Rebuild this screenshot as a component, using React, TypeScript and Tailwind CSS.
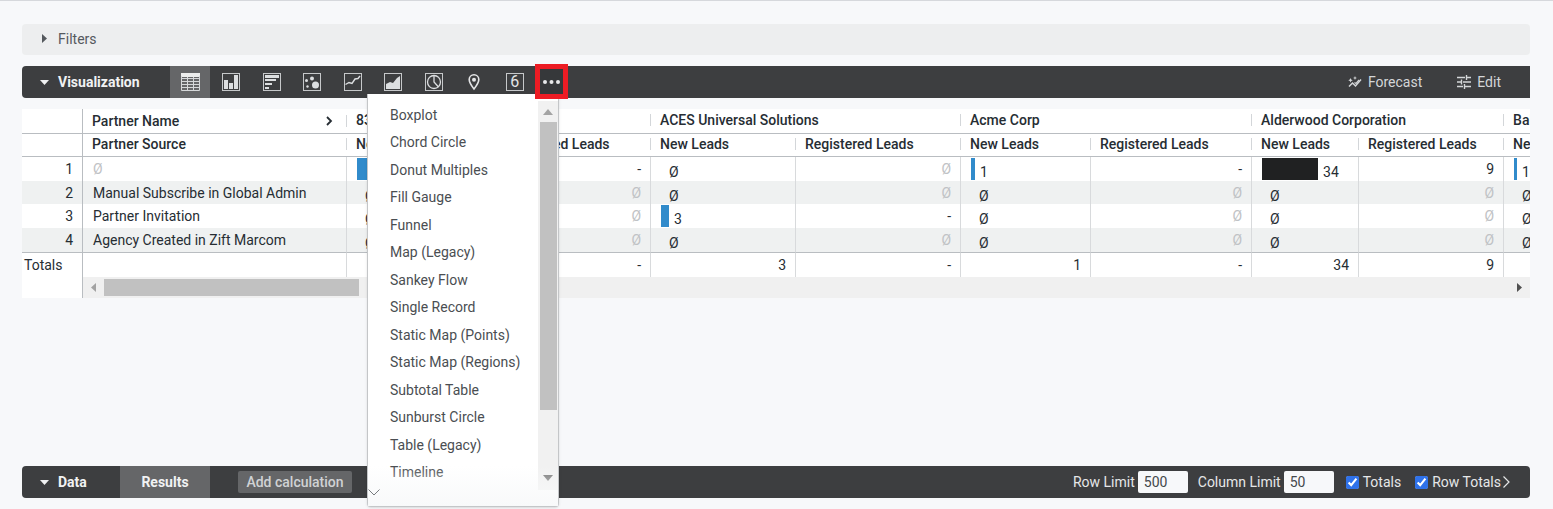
import { useState } from "react";
import type { ReactNode } from "react";

type Lead = { value: string | null; bar?: number; dark?: boolean };
type Row = { source: string | null; height: string; cells: [Lead, string | null][] };

const none: Lead = { value: null };

const partners = ["83", "ACES Universal Solutions", "Acme Corp", "Alderwood Corporation", "Balance Corp"];

const columns = [
  "w-[61px]",
  "w-[264px]",
  "w-[145px]",
  "w-[159px]",
  "w-[145px]",
  "w-[165px]",
  "w-[130px]",
  "w-[161px]",
  "w-[107px]",
  "w-[145px]",
  "w-[130px]",
  "w-[145px]",
];

const rows: Row[] = [
  {
    source: null,
    height: "h-6",
    cells: [
      [{ value: "61", bar: 100 }, "-"],
      [none, null],
      [{ value: "1", bar: 4 }, "-"],
      [{ value: "34", bar: 56, dark: true }, "9"],
      [{ value: "1", bar: 3 }, "-"],
    ],
  },
  {
    source: "Manual Subscribe in Global Admin",
    height: "h-[23px]",
    cells: [[none, null], [none, null], [none, null], [none, null], [none, null]],
  },
  {
    source: "Partner Invitation",
    height: "h-6",
    cells: [[none, null], [{ value: "3", bar: 8 }, "-"], [none, null], [none, null], [none, null]],
  },
  {
    source: "Agency Created in Zift Marcom",
    height: "h-[25px]",
    cells: [[none, null], [none, null], [none, null], [none, null], [none, null]],
  },
];

const totals = ["61", "-", "3", "-", "1", "-", "34", "9", "1", "-"];

const menuItems = [
  "Boxplot",
  "Chord Circle",
  "Donut Multiples",
  "Fill Gauge",
  "Funnel",
  "Map (Legacy)",
  "Sankey Flow",
  "Single Record",
  "Static Map (Points)",
  "Static Map (Regions)",
  "Subtotal Table",
  "Sunburst Circle",
  "Table (Legacy)",
  "Timeline",
];

function Framed({ children }: { children: ReactNode }) {
  return (
    <svg width="18" height="18" viewBox="0 0 18 18" fill="none" aria-hidden="true">
      <rect x="0.5" y="0.5" width="17" height="17" stroke="#c6c8ca" />
      {children}
    </svg>
  );
}

const charts: { name: string; icon: ReactNode }[] = [
  {
    name: "Column",
    icon: (
      <Framed>
        <path d="M2 7h4v9H2zM7 10h4v6H7zM12 2h4v14h-4z" fill="#dcdee0" />
      </Framed>
    ),
  },
  {
    name: "Bar",
    icon: (
      <Framed>
        <path d="M2 2h14v3H2zM2 6h11v2H2zM2 10h7v2H2zM2 14h4v2H2z" fill="#dcdee0" />
      </Framed>
    ),
  },
  {
    name: "Scatterplot",
    icon: (
      <Framed>
        <g fill="#dcdee0">
          <circle cx="12.5" cy="12" r="3.5" />
          <circle cx="9" cy="5.5" r="2" />
          <circle cx="3.5" cy="7.5" r="1.5" />
          <circle cx="4.5" cy="13.5" r="1.2" />
        </g>
      </Framed>
    ),
  },
  {
    name: "Line",
    icon: (
      <Framed>
        <path d="M1.5 11.5 5 9.5l3 1L11 6l3-.5L16 3" stroke="#dcdee0" strokeWidth="1.4" />
      </Framed>
    ),
  },
  {
    name: "Area",
    icon: (
      <Framed>
        <path d="M2 16v-5l4-2 3 1 4-5 3-2v13z" fill="#dcdee0" />
      </Framed>
    ),
  },
  {
    name: "Pie",
    icon: (
      <Framed>
        <circle cx="9" cy="9" r="6.5" stroke="#dcdee0" strokeWidth="1.3" />
        <path d="M9 2.5V9l4.5 5" stroke="#dcdee0" strokeWidth="1.3" />
      </Framed>
    ),
  },
  {
    name: "Map",
    icon: (
      <svg width="18" height="18" viewBox="0 0 18 18" aria-hidden="true">
        <path
          d="M9 1.800c-2.800 0-4.800 2.100-4.800 4.800C4.200 10 9 16 9 16s4.800-6 4.800-9.400c0-2.700-2-4.800-4.800-4.800z"
          fill="none"
          stroke="#e4e5e6"
          strokeWidth="1.6"
        />
        <circle cx="9" cy="6.8" r="2" fill="#e4e5e6" />
      </svg>
    ),
  },
  {
    name: "Single value",
    icon: (
      <span className="grid size-[18px] place-items-center border border-[#c6c8ca] text-base leading-none text-[#e4e5e6]">
        6
      </span>
    ),
  },
];

function TableIcon() {
  return (
    <svg width="19" height="18" viewBox="0 0 19 18" aria-hidden="true">
      <path fill="#eceded" d="M0 0h19v4H0z" />
      <path
        fill="none"
        stroke="#d6d8da"
        d="M.5 3v14.500h18V3M0 5.500h19M0 8.500h19M0 11.500h19M0 14.500h19M6.500 4v14M12.500 4v14"
      />
    </svg>
  );
}

function ForecastIcon() {
  return (
    <svg width="14" height="12" viewBox="0 0 14 12" fill="none" aria-hidden="true">
      <path d="M1 10.500 4.500 7l3 3L13 3.500" stroke="#d4d6d8" strokeWidth="1.5" />
      <path d="m6.500 6.500 1.500 1L11 4" stroke="#d4d6d8" strokeWidth="1.2" />
      <path
        d="m2.500 2 .7 1.500 1.500.7-1.500.7-.7 1.500-.7-1.500L.3 4.200l1.500-.7zM7 0l.6 1.400L9 2l-1.400.6L7 4l-.6-1.400L5 2l1.400-.6z"
        fill="#d4d6d8"
      />
    </svg>
  );
}

function TuneIcon() {
  return (
    <svg width="14" height="14" viewBox="0 0 14 14" fill="none" aria-hidden="true">
      <path
        d="M0 2.500h8M10 2.500h4M9.500 0v5M0 7h4M6 7h8M4.500 4.500v5M0 11.500h6M8 11.500h6M7.500 9v5"
        stroke="#d4d6d8"
        strokeWidth="1.4"
      />
    </svg>
  );
}

function Caret({ className, d, w, h }: { className: string; d: string; w: number; h: number }) {
  return (
    <svg width={w} height={h} viewBox={`0 0 ${w} ${h}`} className={className} aria-hidden="true">
      <path d={d} fill="currentColor" />
    </svg>
  );
}

function HeadLabel({ children }: { children: ReactNode }) {
  return (
    <div className="flex items-center justify-between pb-[2px] pl-[9px]">
      <span className="whitespace-nowrap">{children}</span>
      <span className="h-3 w-px bg-[#d3d6d9]" />
    </div>
  );
}

function LeadCell({ lead }: { lead: Lead }) {
  if (lead.value === null) return <div className="pt-[7px] pl-[18px] leading-4">Ø</div>;
  return (
    <div className="flex items-start gap-[5px] pl-[10px] leading-4">
      <span
        className={
          lead.dark ? "mt-px h-[22px] shrink-0 bg-[#202122]" : "mt-px h-[22px] shrink-0 bg-[#318bcb]"
        }
        style={{ width: lead.bar }}
      />
      <span className="pt-[7px]">{lead.value}</span>
    </div>
  );
}

function ChartMenu() {
  return (
    <div className="absolute top-[28px] right-[9px] h-[413px] w-[192px] rounded-b-sm border border-t-0 border-[#c4c6c8] bg-white pt-[7px] shadow-sm">
      <div className="flex">
        <ul className="grid h-[385px] flex-1 auto-rows-fr">
          {menuItems.map((item) => (
            <li key={item} className="flex">
              <button type="button" className="w-full pl-[22px] text-left whitespace-nowrap text-[#4a4e52]">
                {item}
              </button>
            </li>
          ))}
        </ul>
        <div className="flex h-[389px] w-[20px] flex-col items-center bg-[#f1f1f1]">
          <Caret className="mt-2 text-[#a3a3a3]" d="M0 6 5 0l5 6z" w={10} h={6} />
          <div className="mt-[7px] h-[288px] w-[17px] bg-[#c1c1c1]" />
          <Caret className="mt-auto mb-[9px] text-[#707070]" d="M0 0h10L5 6z" w={10} h={6} />
        </div>
      </div>
      <div className="pointer-events-none absolute inset-x-0 bottom-0 flex h-10 items-end bg-linear-to-b from-white/0 to-[#f8f9fa]">
        <svg width="12" height="7" viewBox="0 0 12 7" fill="none" className="mb-[10px]" aria-hidden="true">
          <path d="m.5.5 5.500 5.500L11.500.5" stroke="#777b7f" />
        </svg>
      </div>
    </div>
  );
}

export default function App() {
  const [menuOpen, setMenuOpen] = useState(true);
  const [rowLimit, setRowLimit] = useState("500");
  const [columnLimit, setColumnLimit] = useState("50");

  return (
    <div className="flex min-h-screen flex-col overflow-hidden border-t border-[#d6d8dc] bg-[#f7f8fa] pt-[23px] pr-[23px] pb-[11px] pl-[22px] font-[Roboto,sans-serif] text-sm text-[#262d33]">
      <button
        type="button"
        className="flex h-[31px] items-center rounded-sm bg-[#edeeef] pb-[2px] pl-[20px] text-[#55595e]"
      >
        <Caret className="mr-[11px] text-[#55595e]" d="M0 0l5 4.500L0 9z" w={5} h={9} />
        Filters
      </button>

      <div className="relative z-10 mt-[11px] flex h-8 items-center rounded-l-sm bg-[#3d3e40]">
        <button type="button" className="flex w-[148px] items-center pl-[18px] font-bold text-[#f1f2f3]">
          <Caret className="mr-[9px]" d="M0 0h9L4.500 5z" w={9} h={5} />
          Visualization
        </button>
        <button type="button" aria-label="Table" className="flex h-8 w-10 items-center justify-center bg-[#656668]">
          <TableIcon />
        </button>
        <div className="ml-px grid w-[324px] grid-cols-8">
          {charts.map((chart) => (
            <button key={chart.name} type="button" aria-label={chart.name} className="flex h-8 items-center justify-center">
              {chart.icon}
            </button>
          ))}
        </div>
        <div className="relative h-8 w-[33px]">
          {menuOpen && <ChartMenu />}
          <button
            type="button"
            aria-label="More charts"
            onClick={() => setMenuOpen(!menuOpen)}
            className="absolute inset-x-0 -top-[2px] flex h-[35px] items-center justify-center border-[5px] border-[#ed1c24] bg-[#36383a]"
          >
            <svg width="17" height="4" viewBox="0 0 17 4" fill="#e8e9ea" aria-hidden="true">
              <circle cx="2" cy="2" r="2" />
              <circle cx="8.5" cy="2" r="2" />
              <circle cx="15" cy="2" r="2" />
            </svg>
          </button>
        </div>
        <div className="ml-auto flex gap-[35px] pr-[29px] text-[#d4d6d8]">
          <button type="button" className="flex items-center gap-[6px]">
            <ForecastIcon />
            Forecast
          </button>
          <button type="button" className="flex items-center gap-[6px]">
            <TuneIcon />
            Edit
          </button>
        </div>
      </div>

      <div className="mt-[11px] overflow-hidden bg-white">
        <table className="w-[1757px] table-fixed border-separate border-spacing-0">
          <colgroup>
            {columns.map((width, i) => (
              <col key={i} className={width} />
            ))}
          </colgroup>
          <thead className="text-left [&_th]:border-b [&_th]:border-[#b9bdc1] [&_th]:p-0 [&_th]:font-medium">
            <tr className="h-[25px]">
              <th className="border-r" />
              <th>
                <div className="flex items-center pl-[9px]">
                  Partner Name
                  <svg width="7" height="10" viewBox="0 0 7 10" fill="none" className="mr-[13px] ml-auto" aria-hidden="true">
                    <path d="m1 1 4 4-4 4" stroke="#262d33" strokeWidth="1.8" />
                  </svg>
                  <span className="h-3 w-px bg-[#d3d6d9]" />
                </div>
              </th>
              {partners.map((name) => (
                <th key={name} colSpan={2}>
                  <HeadLabel>{name}</HeadLabel>
                </th>
              ))}
            </tr>
            <tr className="h-[23px]">
              <th className="border-r" />
              <th>
                <HeadLabel>Partner Source</HeadLabel>
              </th>
              {partners.flatMap((name) => [
                <th key={name + "-new"}>
                  <HeadLabel>New Leads</HeadLabel>
                </th>,
                <th key={name + "-reg"}>
                  <HeadLabel>Registered Leads</HeadLabel>
                </th>,
              ])}
            </tr>
          </thead>
          <tbody className="[&_td]:border-r [&_td]:border-[#d8dadc] [&_td]:p-0 [&_td]:leading-5 [&_tr:last-child>td]:border-b [&_tr:last-child>td]:border-b-[#b9bdc1]">
            {rows.map((row, i) => (
              <tr key={i} className={row.height + " even:bg-[#eff1f1]"}>
                <td className="border-r-[#b9bdc1]!">
                  <div className="pr-[9px] text-right">{i + 1}</div>
                </td>
                <td>
                  <div className="pl-[10px]">{row.source ?? <span className="text-[#bfc2c5]">Ø</span>}</div>
                </td>
                {row.cells.flatMap(([lead, registered], j) => [
                  <td key={j + "-new"} className="align-top">
                    <LeadCell lead={lead} />
                  </td>,
                  <td key={j + "-reg"}>
                    <div className="pr-[9px] text-right">
                      {registered ?? <span className="text-[#bfc2c5]">Ø</span>}
                    </div>
                  </td>,
                ])}
              </tr>
            ))}
          </tbody>
          <tfoot className="[&_td]:border-r [&_td]:border-[#d8dadc] [&_td]:p-0">
            <tr className="h-6">
              <th scope="row" className="border-r border-[#b9bdc1] p-0 pl-[2px] text-left font-normal">
                Totals
              </th>
              <td />
              {totals.map((total, i) => (
                <td key={i}>
                  <div className="pr-[9px] text-right">{total}</div>
                </td>
              ))}
            </tr>
          </tfoot>
        </table>
        <div className="flex h-[21px]">
          <div className="w-[61px] border-r border-[#b9bdc1]" />
          <div className="flex flex-1 items-center bg-[#f0f0f0] pr-2 pl-2">
            <Caret className="text-[#a3a3a3]" d="M5 0v9L0 4.500z" w={5} h={9} />
            <div className="ml-2 h-[17px] w-[255px] bg-[#c1c1c1]" />
            <Caret className="ml-auto text-[#505050]" d="M0 0l5 4.500L0 9z" w={5} h={9} />
          </div>
        </div>
      </div>

      <div className="mt-auto flex h-8 items-center rounded-sm bg-[#3d3e40] text-[#e6e7e8]">
        <button type="button" className="flex w-[98px] items-center pl-[18px] font-bold text-[#f1f2f3]">
          <Caret className="mr-[9px]" d="M0 0h9L4.500 5z" w={9} h={5} />
          Data
        </button>
        <button type="button" className="h-8 w-[90px] bg-[#656668] font-bold text-[#f1f2f3]">
          Results
        </button>
        <button
          type="button"
          className="ml-7 h-[22px] w-[114px] rounded-xs bg-[#656668] font-medium whitespace-nowrap text-[#d0d2d4]"
        >
          Add calculation
        </button>
        <div className="ml-auto flex items-center pr-[20px]">
          <label htmlFor="row-limit">Row Limit</label>
          <input
            id="row-limit"
            value={rowLimit}
            onChange={(e) => setRowLimit(e.target.value)}
            className="ml-[3px] h-[22px] w-[50px] rounded-xs bg-[#f7f8fa] px-[6px] text-[#44484c]"
          />
          <label htmlFor="column-limit" className="ml-[10px]">
            Column Limit
          </label>
          <input
            id="column-limit"
            value={columnLimit}
            onChange={(e) => setColumnLimit(e.target.value)}
            className="ml-[3px] h-[22px] w-[50px] rounded-xs bg-[#f7f8fa] px-[6px] text-[#44484c]"
          />
          <label className="ml-3 flex items-center gap-1">
            <input type="checkbox" defaultChecked className="size-[13px] accent-[#2f72ea]" />
            Totals
          </label>
          <label className="ml-[14px] flex items-center gap-1">
            <input type="checkbox" defaultChecked className="size-[13px] accent-[#2f72ea]" />
            Row Totals
          </label>
          <svg width="7" height="12" viewBox="0 0 7 12" fill="none" className="ml-[2px]" aria-hidden="true">
            <path d="m.5.5 5.500 5.500L.5 11.500" stroke="#e6e7e8" strokeWidth="1.2" />
          </svg>
        </div>
      </div>
    </div>
  );
}
